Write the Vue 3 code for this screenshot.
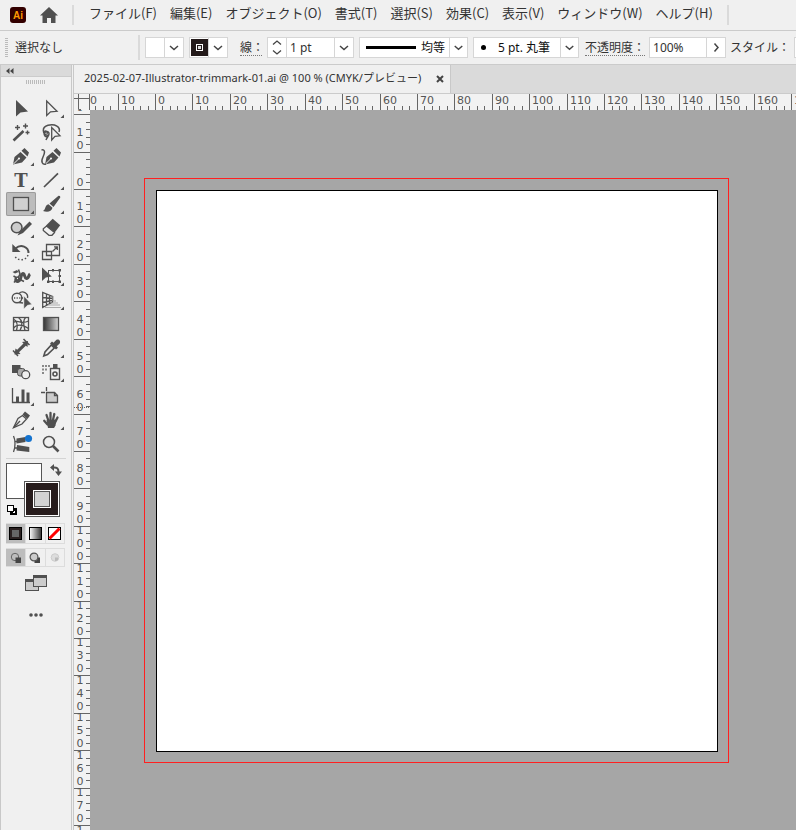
<script setup>
import { computed, onBeforeUnmount, onMounted, ref } from 'vue'

const menus = [
  'ファイル(F)', '編集(E)', 'オブジェクト(O)', '書式(T)', '選択(S)',
  '効果(C)', '表示(V)', 'ウィンドウ(W)', 'ヘルプ(H)',
]

const strokeWidth = ref('1 pt')
const opacity = ref('100%')
const activeTool = ref('rect')

// Each tool carries its name and whether it hides a flyout group.
const tools = [
  ['select', '選択', false], ['direct', 'ダイレクト選択', true],
  ['wand', '自動選択', false], ['lasso', 'なげなわ', false],
  ['pen', 'ペン', true], ['curve', '曲線', false],
  ['type', '文字', true], ['line', '直線', true],
  ['rect', '長方形', true], ['brush', 'ブラシ', true],
  ['shaper', 'Shaper', true], ['eraser', '消しゴム', true],
  ['rotate', '回転', true], ['scale', '拡大・縮小', true],
  ['width', '線幅', true], ['free', '自由変形', true],
  ['build', 'シェイプ形成', true], ['persp', '遠近グリッド', true],
  ['mesh', 'メッシュ', false], ['grad', 'グラデーション', false],
  ['measure', '寸法', false], ['dropper', 'スポイト', true],
  ['blend', 'ブレンド', false], ['spray', 'シンボルスプレー', true],
  ['graph', 'グラフ', true], ['artboard', 'アートボード', false],
  ['slice', 'スライス', true], ['hand', '手のひら', true],
  ['twine', 'クロスと重なり', false], ['zoom', 'ズーム', false],
].map(([id, label, more]) => ({ id, label, more }))

// Ruler scale: pixels for ten millimetres at 100 %.
const STEP = 37.42
function marks(origin, from, length) {
  const out = []
  for (let i = from; origin + STEP * i < length; i++) {
    const pos = Math.round(origin + STEP * i) + 0.5
    const minor = [1, 2, 3, 4].map(n => Math.round(origin + STEP * (i + n / 5)) + 0.5)
    out.push({ pos, minor, label: String(Math.abs(i * 10)) })
  }
  return out
}
const view = ref({ w: window.innerWidth, h: window.innerHeight })
const measure = () => { view.value = { w: window.innerWidth, h: window.innerHeight } }
onMounted(() => window.addEventListener('resize', measure))
onBeforeUnmount(() => window.removeEventListener('resize', measure))
const hMarks = computed(() => marks(65, -2, view.value.w - 90))
const vMarks = computed(() => marks(79, -2, view.value.h - 72))
</script>

<template>
  <div class="app">
    <header class="menubar">
      <svg class="logo" width="16" height="16" viewBox="0 0 16 16" aria-label="Ai">
        <rect width="16" height="16" rx="3" fill="#330000" />
        <text x="8" y="11.5" text-anchor="middle" font-size="10" font-weight="bold" fill="#ff9a00">Ai</text>
      </svg>
      <button class="plain home" aria-label="ホーム">
        <svg width="18" height="16" viewBox="0 0 18 16"><path d="M9 0 18 8.500H15.500V16H11V11H7V16H2.500V8.500H0Z" fill="#505050" /></svg>
      </button>
      <span class="rule"></span>
      <nav class="menus">
        <button v-for="m in menus" :key="m" class="plain">{{ m }}</button>
      </nav>
      <span class="rule"></span>
    </header>

    <div class="options">
      <span class="grip-v"></span>
      <span class="state">選択なし</span>
      <span class="rule"></span>
      <button class="box swatch fill-swatch" aria-label="塗り">
        <span class="swatch-face"></span>
        <svg class="chev" viewBox="0 0 18 19"><path d="M5 8l4 3.500L13 8" /></svg>
      </button>
      <button class="box swatch stroke-swatch" aria-label="線のカラー">
        <span class="swatch-face">
          <svg width="17" height="17" viewBox="0 0 17 17"><rect width="17" height="17" fill="#231a1a" /><rect x="5.500" y="5.500" width="6" height="6" fill="#231a1a" stroke="#fff" /><rect x="7" y="7" width="3" height="3" fill="#ddd" /></svg>
        </span>
        <svg class="chev" viewBox="0 0 18 19"><path d="M5 8l4 3.500L13 8" /></svg>
      </button>
      <label class="link stroke-label" for="stroke-w">線：</label>
      <div class="box stroke-box">
        <span class="stepper">
          <button class="plain" aria-label="増やす"><svg width="10" height="7" viewBox="0 0 10 7"><path d="M1 5.500 5 2l4 3.500" /></svg></button>
          <button class="plain" aria-label="減らす"><svg width="10" height="7" viewBox="0 0 10 7"><path d="M1 1.500 5 5l4-3.500" /></svg></button>
        </span>
        <input id="stroke-w" v-model="strokeWidth" type="text" />
        <button class="plain drop" aria-label="線幅の一覧"><svg class="chev" viewBox="0 0 18 19"><path d="M5 8l4 3.500L13 8" /></svg></button>
      </div>
      <div class="box pick profile">
        <select aria-label="可変線幅プロファイル"><option>均等</option></select>
        <span class="profile-line"></span>
        <svg class="chev" viewBox="0 0 18 19"><path d="M5 8l4 3.500L13 8" /></svg>
      </div>
      <div class="box pick brush-def">
        <select aria-label="ブラシ定義"><option>5 pt. 丸筆</option></select>
        <span class="dot"></span>
        <svg class="chev" viewBox="0 0 18 19"><path d="M5 8l4 3.500L13 8" /></svg>
      </div>
      <label class="link opacity-label" for="opacity">不透明度：</label>
      <div class="box opacity-box">
        <input id="opacity" v-model="opacity" type="text" />
        <button class="plain drop" aria-label="不透明度の一覧"><svg class="chev" viewBox="0 0 18 19"><path d="M7.500 5.500 11 9.500l-3.500 4" /></svg></button>
      </div>
      <span class="style-label">スタイル：</span>
      <button class="box style-box" aria-label="グラフィックスタイル"></button>
    </div>

    <div class="body">
      <aside class="toolbar">
        <button class="plain collapse" aria-label="折りたたむ">
          <svg width="8" height="6" viewBox="0 0 8 6"><path d="M3.500 0V6L0 3ZM7.500 0V6L4 3Z" fill="#444" /></svg>
        </button>
        <span class="grip-h"></span>
        <div class="tools">
          <button
            v-for="t in tools" :key="t.id" class="plain tool"
            :class="{ active: activeTool === t.id }" :aria-label="t.label" @click="activeTool = t.id"
          >
            <svg width="30" height="24" viewBox="0 0 30 24">
              <path v-if="t.id === 'select'" class="f" d="M10 4V20.500L14.500 16.500 22 15.500Z" />
              <path v-else-if="t.id === 'direct'" class="s w" d="M10.700 5V19.500L14.500 15.800 21 15.300Z" />
              <template v-else-if="t.id === 'wand'">
                <path class="s" stroke-width="2.600" d="M7.500 20.500 17.500 11" />
                <path class="s" stroke-width="1.400" d="M11.500 5v5M9 7.500h5M19.500 3.500v5M17 6h5M21.500 10.500v4M19.500 12.500h4" />
              </template>
              <template v-else-if="t.id === 'lasso'">
                <path class="s" stroke-width="1.500" d="M12 15.500C6 14 5.500 7 12 5.300 19 3.500 25 7 23 12M11.500 16.500A2.500 2.500 0 1 1 13 13C13.500 16 11 17 10 20M8 12c2-2 4 0 3 2" />
                <path class="s w" d="M15.700 7.500V20L19 16.300 24 15.800Z" />
              </template>
              <template v-else-if="t.id === 'pen' || t.id === 'curve'">
                <g :class="{ shifted: t.id === 'curve' }">
                  <path class="f" d="M7 20.500 8.500 13 14.500 8 20.500 13.500 16 18.500ZM15.500 6.800 18.500 4 23 8.500 21.500 12.500Z" />
                  <path class="hl" d="M7.500 20 12.500 15" /><circle cx="13" cy="14.500" r="1.100" fill="#f0f0f0" />
                </g>
                <path v-if="t.id === 'curve'" class="s" stroke-width="1.500" d="M5.500 6C10 5 8.500 10 7 13 4.500 18 6.500 21 10 20" />
              </template>
              <text v-else-if="t.id === 'type'" x="15" y="19" class="tee">T</text>
              <path v-else-if="t.id === 'line'" class="s" stroke-width="1.700" d="M8 19 22 5.300" />
              <rect v-else-if="t.id === 'rect'" class="s" x="7.500" y="5.500" width="15" height="13" fill="#d0d0d0" />
              <path v-else-if="t.id === 'brush'" class="f" d="M24 4 24.300 5.500 17.500 15 13.500 11.500 22.500 3.800ZM12.500 12.300 16.500 15.800C15.500 20 11 20.500 7 19 10 17.500 8.500 13.500 12.500 12.300Z" />
              <template v-else-if="t.id === 'shaper'">
                <circle class="s" cx="10.700" cy="11.500" r="5.300" stroke-width="1.500" fill="#ccc" />
                <path class="f" d="M23.500 5.500 26 8 17 17 11.500 19.500 14 15Z" />
              </template>
              <template v-else-if="t.id === 'eraser'">
                <path class="s w" d="M10.500 10 18.500 16.500 16 19.300H13L7.300 14.500V12.700Z" />
                <path class="f" d="M16.700 2.700 24.200 9.300 18.700 16.500 10 9.500Z" />
              </template>
              <template v-else-if="t.id === 'rotate'">
                <path class="s" stroke-width="2" d="M9.500 8.500C15 3.500 22.500 7 22.500 13" />
                <path class="f" d="M6.300 4V12H14.500Z" />
                <path class="s" stroke-width="1.500" stroke-dasharray="1.500 2" d="M22 15C20 21 11 21.500 8.500 15.500" />
              </template>
              <path v-else-if="t.id === 'scale'" class="s" d="M10.500 4.500H23.500V15.500H10.500ZM6.500 11.500H15.500V19.500H6.500ZM16.500 11.500 21 7M18 6.800H21.300V10" />
              <template v-else-if="t.id === 'width'">
                <path class="s" stroke-width="3" d="M12 14C9 14 9 18 12 17.500 16 17 14 10 17 9.500 19 9.500 18 14 20.500 14.500 23 14.500 22.500 11 24 10" />
                <path class="f" d="M6.500 8 11 6 12.500 8 9 9.500Z" />
                <path class="s" stroke-width="1.600" d="M12.500 5.500 14 10 12 14 8 18.500M7.500 12 11 14 18 17.500" />
                <circle class="s w" cx="11.500" cy="14.500" r="1.300" />
              </template>
              <template v-else-if="t.id === 'free'">
                <rect class="s" x="12.500" y="6.500" width="11" height="11" stroke-width="1" />
                <path class="f" d="M22.500 5h2.500v2.500h-2.500ZM22.500 16.500h2.500V19h-2.500ZM11 16.500h2.500V19H11ZM16 5h2v2.500h-2ZM16 16.500h2v2.500h-2ZM22.500 11h2.500v2h-2.500ZM6 3.500V17L9.800 13.500 15.800 12.500Z" />
              </template>
              <template v-else-if="t.id === 'build'">
                <circle class="s" cx="11" cy="10" r="4.800" stroke-width="1.400" />
                <path class="s" stroke-width="1.400" d="M13 5.500A5 5 0 0 1 21.500 10M13 14.500 17 15" />
                <path class="s" stroke-width="1.400" stroke-dasharray="1.200 1.400" d="M8 10H18" />
                <path class="f" d="M17.800 8V21L21.500 17.300 26 16.500Z" stroke="#f0f0f0" stroke-width=".6" />
              </template>
              <template v-else-if="t.id === 'persp'">
                <path class="s" d="M6.700 4.500V19.500L16.500 14V8.500ZM10.500 6V17M13.500 7V15.500M6.700 9.500 16.500 10.300M6.700 14.500 16.500 12.300" />
                <path d="M17 13H20M15 15H22M12 17H24M9 19.500H25M17 8V13" fill="none" stroke="#aaa" />
              </template>
              <template v-else-if="t.id === 'mesh'">
                <rect class="s" x="7.500" y="5.500" width="15" height="13" />
                <path class="s" d="M7.500 10.500C12 7 15 13 22.500 9M7.500 16.500C10 12 16 12 22.500 16.500M12.500 5.500C17 9 16.500 14 14 18.500M7.500 7C11 9 12 13 10.500 18.500M19.500 5.500C16 9 18 14 19 18.500" />
              </template>
              <template v-else-if="t.id === 'grad'">
                <defs><linearGradient id="toolGrad"><stop stop-color="#333" /><stop offset="1" stop-color="#d5d5d5" /></linearGradient></defs>
                <rect class="s" x="7.500" y="5.500" width="15" height="13" fill="url(#toolGrad)" />
              </template>
              <template v-else-if="t.id === 'measure'">
                <path class="f" d="M8.500 18.500 9.500 12.500 11.200 13.800 17.500 7.500 16 6 22 5 21.500 11 19.800 9.800 13 16.300 14.500 18Z" />
                <path class="s" stroke-width="1.500" d="M7 14.500 12 20M17.500 3 23.500 9" />
              </template>
              <template v-else-if="t.id === 'dropper'">
                <path class="f" d="M14 7.500 16 5.500 17.500 6.800 20.500 3.800C23 2.800 25 5 23.700 7.500L20.700 10.200 22 11.700 20 13.500Z" />
                <path class="s w" stroke-width="1.600" d="M15.300 9 18.300 12 11.500 18.500 7.800 19.900 9 16Z" />
              </template>
              <template v-else-if="t.id === 'blend'">
                <rect class="f" x="6" y="5" width="8.500" height="8" />
                <rect x="11.500" y="8.500" width="7.500" height="7.500" rx="2.500" fill="#aaa" stroke="#505050" />
                <circle class="s w" cx="19.700" cy="14.700" r="4" />
              </template>
              <template v-else-if="t.id === 'spray'">
                <path fill="#888" d="M6 5h2v2H6ZM9 5h2v2h-2ZM12 5h2v2h-2ZM6 8.500h2v2H6ZM9 8.500h2v2h-2ZM6 12h2v2H6Z" />
                <path class="f" d="M17 4H21.500V8H17Z" />
                <rect class="s" x="14.500" y="8.500" width="9" height="11" stroke-width="1.400" />
                <circle class="s" cx="19" cy="14" r="2" stroke-width="1.600" />
              </template>
              <template v-else-if="t.id === 'graph'">
                <path class="s" d="M6.500 4V18.500H24" />
                <path class="f" d="M10 12.500H13V18H10ZM15.500 5.500H18.500V18H15.500ZM20.500 8.500H23.500V18H20.500Z" />
              </template>
              <template v-else-if="t.id === 'artboard'">
                <path class="s" fill="#ccc" d="M10.500 8.500H18.500L21.500 11.500V18.500H10.500Z" />
                <path class="s" d="M5 8.500H9M10.500 3V7M18.500 8.500V11.500H21.500" />
              </template>
              <template v-else-if="t.id === 'slice'">
                <path class="f" d="M16.500 6.500 19 3.500 24 7.500 21.500 11Z" />
                <path class="s w" d="M16.500 7.500 20.500 11 16 16 7.500 19.700 12 10.500Z" /><path class="s" d="M8 19.300 14 13" />
              </template>
              <template v-else-if="t.id === 'hand'">
                <path class="s" stroke-width="2.300" stroke-linecap="round" d="M8.200 12.800 11.500 16.500M10.500 7 12.500 13M14.500 5V12M18.300 6 17 12M21.500 9.500 19 14.500" />
                <path class="f" d="M10.500 12 20.500 11.500 19.500 17.500 18 20H12Z" />
              </template>
              <template v-else-if="t.id === 'twine'">
                <path class="s" d="M7.500 4C9.500 8 9.500 15 7.500 20M8.500 9.500H13M9 16H12" />
                <path class="f" d="M10.500 6.500 19.500 5V10L10.500 11.500ZM11 13 23.300 15V20L10.500 18.500Z" />
                <circle cx="22.500" cy="6.500" r="3.600" fill="#1473cf" />
              </template>
              <template v-else-if="t.id === 'zoom'">
                <circle class="s" cx="13" cy="10" r="5.500" stroke-width="1.500" />
                <path class="s" stroke-width="2.600" d="M17 14 22.500 19.500" />
              </template>
              <path v-if="t.more" class="f" d="M28 18.500V22H24.500Z" />
            </svg>
          </button>
        </div>

        <hr class="split" />

        <div class="paint">
          <button class="plain paint-fill" aria-label="塗り"></button>
          <button class="plain paint-stroke" aria-label="線"><span></span></button>
          <button class="plain paint-swap" aria-label="塗りと線を入れ替え">
            <svg width="12" height="12" viewBox="0 0 12 12"><path d="M3 3.500C7 3 8.500 4.500 8.500 8" fill="none" stroke="#505050" stroke-width="2" /><path d="M0 3.500 4 0V7ZM8.500 12 5 7.500H12Z" fill="#505050" /></svg>
          </button>
          <button class="plain paint-reset" aria-label="初期設定の塗りと線">
            <svg width="10" height="10" viewBox="0 0 10 10"><rect x="3" y="3" width="7" height="7" fill="#000" /><rect x="6" y="6" width="2" height="2" fill="#fff" /><rect x=".5" y=".5" width="6" height="6" fill="#fff" stroke="#000" /></svg>
          </button>
        </div>

        <div class="trio">
          <button class="plain on" aria-label="カラー"><svg width="13" height="13" viewBox="0 0 13 13"><rect x=".5" y=".5" width="12" height="12" fill="#2a2020" stroke="#000" /><rect x="3" y="3" width="7" height="7" fill="#666" /></svg></button>
          <button class="plain" aria-label="グラデーション"><svg width="13" height="13" viewBox="0 0 13 13"><defs><linearGradient id="miniGrad"><stop stop-color="#fff" /><stop offset="1" stop-color="#333" /></linearGradient></defs><rect x=".5" y=".5" width="12" height="12" fill="url(#miniGrad)" stroke="#000" /></svg></button>
          <button class="plain" aria-label="なし"><svg width="13" height="13" viewBox="0 0 13 13"><rect x=".5" y=".5" width="12" height="12" fill="#fff" stroke="#000" /><path d="M1.500 11.500 11.500 1.500" stroke="#f00" stroke-width="3" /></svg></button>
        </div>
        <div class="trio modes">
          <button class="plain on" aria-label="標準描画"><svg width="12" height="12" viewBox="0 0 12 12"><circle cx="5" cy="5" r="3.700" fill="none" stroke="#666" /><rect x="5.500" y="5.500" width="5.500" height="5.500" fill="#444" /></svg></button>
          <button class="plain" aria-label="背面描画"><svg width="12" height="12" viewBox="0 0 12 12"><rect x="5.500" y="5.500" width="5.500" height="5.500" fill="#444" /><circle cx="5" cy="5" r="3.900" fill="#ccc" stroke="#555" stroke-width="1.200" /></svg></button>
          <button class="plain" aria-label="内側描画"><svg width="12" height="12" viewBox="0 0 12 12"><circle cx="6" cy="5.500" r="3.800" fill="#ddd" stroke="#ccc" /><path d="M6 5.500h3v2L7.500 9H6Z" fill="#bbb" /></svg></button>
        </div>

        <button class="plain screen" aria-label="スクリーンモード">
          <svg width="22" height="16" viewBox="0 0 22 16"><rect x=".5" y="4.500" width="13" height="11" fill="#ccc" stroke="#505050" /><rect y="4" width="14" height="3" fill="#505050" /><rect x="8.500" y=".5" width="13" height="11" fill="#ccc" stroke="#505050" /><rect x="8" width="14" height="3" fill="#505050" /></svg>
        </button>
        <button class="plain more" aria-label="ツールバーを編集">
          <svg width="14" height="4" viewBox="0 0 14 4" fill="#505050"><circle cx="2" cy="2" r="1.800" /><circle cx="7" cy="2" r="1.800" /><circle cx="12" cy="2" r="1.800" /></svg>
        </button>
      </aside>

      <main class="doc">
        <div class="tabs">
          <div class="tab">
            <span>2025-02-07-Illustrator-trimmark-01.ai @ 100 % (CMYK/プレビュー)</span>
            <button class="plain" aria-label="閉じる"><svg width="8" height="8" viewBox="0 0 8 8"><path d="M1 1 7 7M7 1 1 7" stroke="#444" stroke-width="2" /></svg></button>
          </div>
        </div>
        <div class="sheet">
          <svg class="corner" viewBox="0 0 16 16"><path d="M0 4.500H15M4.500 0V15.500H7M15.500 0V16" fill="none" stroke="#666" /></svg>
          <svg class="ruler-h">
            <g v-for="m in hMarks" :key="m.pos">
              <line :x1="m.pos" :x2="m.pos" y1="0" y2="16" />
              <line v-for="p in m.minor" :key="p" :x1="p" :x2="p" y1="12" y2="16" />
              <text :x="m.pos + 2.5" y="10">{{ m.label }}</text>
            </g>
          </svg>
          <svg class="ruler-v">
            <g v-for="m in vMarks" :key="m.pos">
              <line :y1="m.pos" :y2="m.pos" x1="0" x2="16" />
              <line v-for="p in m.minor" :key="p" :y1="p" :y2="p" x1="12" x2="16" />
              <text
                v-for="(d, i) in m.label" :key="i" x="2.500"
                :y="m.pos - 3.5 - 13 * (m.label.length - 1 - i)"
              >{{ d }}</text>
            </g>
            <line class="cursor" x1="0" x2="16" y1="297.500" y2="297.500" />
          </svg>
          <div class="canvas">
            <div class="bleed"></div>
            <div class="artboard"></div>
          </div>
        </div>
      </main>
    </div>
  </div>
</template>

<style>
html, body { margin: 0; }
</style>

<style scoped>
.app {
  display: flex;
  flex-direction: column;
  height: 100vh;
  overflow: hidden;
  background: #f0f0f0;
  color: #333;
  font: 12px/18px "Noto Sans", "Noto Sans CJK JP", sans-serif;
}
.app *, .app { box-sizing: border-box; }
svg { display: block; flex: none; }
.plain {
  appearance: none;
  border: 0;
  padding: 0;
  margin: 0;
  background: none;
  color: inherit;
  font: inherit;
  white-space: nowrap;
}
.rule { flex: none; width: 2px; height: 20px; background: #dadada; }

/* menu bar */
.menubar {
  flex: none;
  display: flex;
  align-items: center;
  height: 31px;
  padding-left: 10px;
  border-bottom: 1px solid #cbcbcb;
}
.logo { font-family: "Liberation Sans", sans-serif; }
.home { margin: 0 14px; }
.menus {
  display: flex;
  gap: 13px;
  padding: 0 14px 4px 15px;
  font-family: "Noto Sans CJK JP", sans-serif;
  font-size: 13px;
}

/* control bar */
.options {
  flex: none;
  display: flex;
  align-items: center;
  height: 34px;
  padding-left: 5px;
  border-bottom: 1px solid #cbcbcb;
  white-space: nowrap;
}
.options > * { flex: none; }
.grip-v {
  width: 3px;
  height: 20px;
  margin-right: 7px;
  background: repeating-linear-gradient(#bbb 0 1px, transparent 1px 2px);
}
.options .state { width: 123px; }
.options .rule { height: 25px; }
.box {
  height: 21px;
  padding: 0;
  border: 1px solid #d6d6d6;
  background: #fff;
  color: #333;
}
.chev { width: 18px; height: 19px; fill: none; stroke: #444; stroke-width: 1.5; }
.swatch { display: flex; width: 39px; margin-left: 5px; }
.swatch-face {
  display: grid;
  place-items: center;
  flex: 1;
  height: 19px;
  border-right: 1px solid #d6d6d6;
}
.link { border-bottom: 1px dotted #777; line-height: 15px; }
.stroke-label { width: 22px; margin: 0 5px 0 12px; }
.stroke-box, .opacity-box { display: flex; }
.stroke-box { width: 87px; }
.stepper {
  display: flex;
  flex-direction: column;
  justify-content: space-around;
  padding: 0 4px;
  border-right: 1px solid #d6d6d6;
}
.stepper svg { fill: none; stroke: #444; stroke-width: 1.3; }
.box input, .box select {
  appearance: none;
  flex: 1;
  min-width: 0;
  border: 0;
  padding: 0 3px;
  background: transparent;
  color: inherit;
  font: inherit;
  outline: 0;
}
.drop { border-left: 1px solid #d6d6d6; }
.pick { display: grid; align-items: center; margin-left: 5px; color: #111; }
.pick > * { grid-area: 1 / 1; }
.pick .chev { justify-self: end; border-left: 1px solid #d6d6d6; pointer-events: none; }
.profile { width: 109px; }
.profile select { padding-left: 61px; }
.profile-line { width: 50px; height: 3px; margin-left: 6px; background: #000; pointer-events: none; }
.brush-def { width: 106px; }
.brush-def select { padding-left: 24px; }
.dot { width: 5px; height: 5px; margin-left: 7px; border-radius: 50%; background: #000; pointer-events: none; }
.opacity-label { margin: 0 4px 0 6px; }
.opacity-box { width: 77px; }
.style-label { margin: 0 4px; }
.style-box { width: 40px; }

.body { flex: 1; display: flex; gap: 1px; min-height: 0; }

/* tool bar */
.toolbar {
  flex: none;
  display: flex;
  flex-direction: column;
  width: 72px;
  border: solid #c8c8c8;
  border-width: 0 1px;
}
.collapse {
  height: 12px;
  padding-left: 5px;
  border-bottom: 1px solid #cbcbcb;
  background: #dadada;
}
.grip-h {
  width: 19px;
  height: 4px;
  margin: 3px 25px 12px;
  background: repeating-linear-gradient(90deg, #bbb 0 1px, transparent 1px 2px);
}
.tools {
  display: grid;
  grid-template-columns: repeat(2, 30px);
  grid-auto-rows: 24px;
  padding-left: 5px;
}
.tool { border-radius: 2px; }
.tool.active { background: #bcbcbc; box-shadow: inset 0 0 0 1px #9c9c9c; }
.f { fill: #505050; }
.s { stroke: #505050; }
.s:not([stroke-width]) { stroke-width: 1.3; }
.s:not([fill]) { fill: none; }
.s.w { fill: #f0f0f0; }
.hl { stroke: #f0f0f0; fill: none; }
.shifted { transform: translateX(2px); }
.tee { font: bold 18px "DejaVu Serif", serif; text-anchor: middle; fill: #505050; }
.split { width: 60px; height: 1px; margin: 2px 5px 4px; border: 0; background: #d4d4d4; }

.paint { position: relative; height: 60px; margin: 0 5px; }
.paint > * { position: absolute; }
.paint-fill { left: 0; top: 0; width: 36px; height: 36px; border: 1px solid #555; background: #fff; }
.paint-stroke {
  display: grid;
  place-items: center;
  left: 18px;
  top: 18px;
  width: 36px;
  height: 36px;
  border: 1px solid #555;
  background: #271c1c;
  box-shadow: inset 0 0 0 1px #fff;
}
.paint-stroke span {
  width: 18px;
  height: 18px;
  border: 1px solid #fff;
  background: #d3d3d3;
  box-shadow: inset 0 0 0 1px #555;
}
.paint-swap { left: 44px; top: 1px; }
.paint-reset { left: 1px; top: 42px; }

.trio {
  display: grid;
  grid-template-columns: repeat(3, 1fr);
  width: 59px;
  height: 21px;
  margin-left: 5px;
  border: solid #dcdcdc;
  border-width: 1px 1px 1px 0;
}
.trio button { display: grid; place-items: center; }
.trio button + button { border-left: 1px solid #dcdcdc; }
.trio .on { background: #bdbdbd; }
.modes { height: 19px; margin-top: 4px; }
.screen { align-self: center; margin-top: 8px; }
.more { align-self: center; margin-top: 22px; }

/* document window */
.doc {
  flex: 1;
  display: flex;
  flex-direction: column;
  min-width: 0;
  border-left: 1px solid #c8c8c8;
}
.tabs { flex: none; display: flex; height: 29px; border-bottom: 1px solid #cbcbcb; background: #dadada; }
.tab {
  display: flex;
  align-items: center;
  gap: 15px;
  padding: 0 6px 2px 10px;
  border-right: 1px solid #c8c8c8;
  background: #f0f0f0;
  font-size: 11px;
}
.tab button { padding-top: 2px; }
.sheet {
  flex: 1;
  display: grid;
  grid-template: 16px minmax(0, 1fr) / 16px minmax(0, 1fr);
  min-height: 0;
  background: #f2f2f2;
}
.corner { width: 16px; height: 16px; }
.ruler-h { width: 100%; height: 16px; overflow: hidden; }
.ruler-v { width: 16px; height: 100%; overflow: hidden; }
.ruler-h line, .ruler-v line { stroke: #666; }
.ruler-v .cursor { stroke-dasharray: 1 1; }
.ruler-h text, .ruler-v text { font: 11px "DejaVu Sans", sans-serif; fill: #555; }
.canvas { position: relative; overflow: hidden; background: #a6a6a6; }
.bleed, .artboard { position: absolute; }
.bleed { left: 54px; top: 68px; width: 585px; height: 585px; border: 1px solid #ff2020; }
.artboard { left: 66px; top: 80px; width: 562px; height: 562px; border: 1px solid #000; background: #fff; }
</style>
